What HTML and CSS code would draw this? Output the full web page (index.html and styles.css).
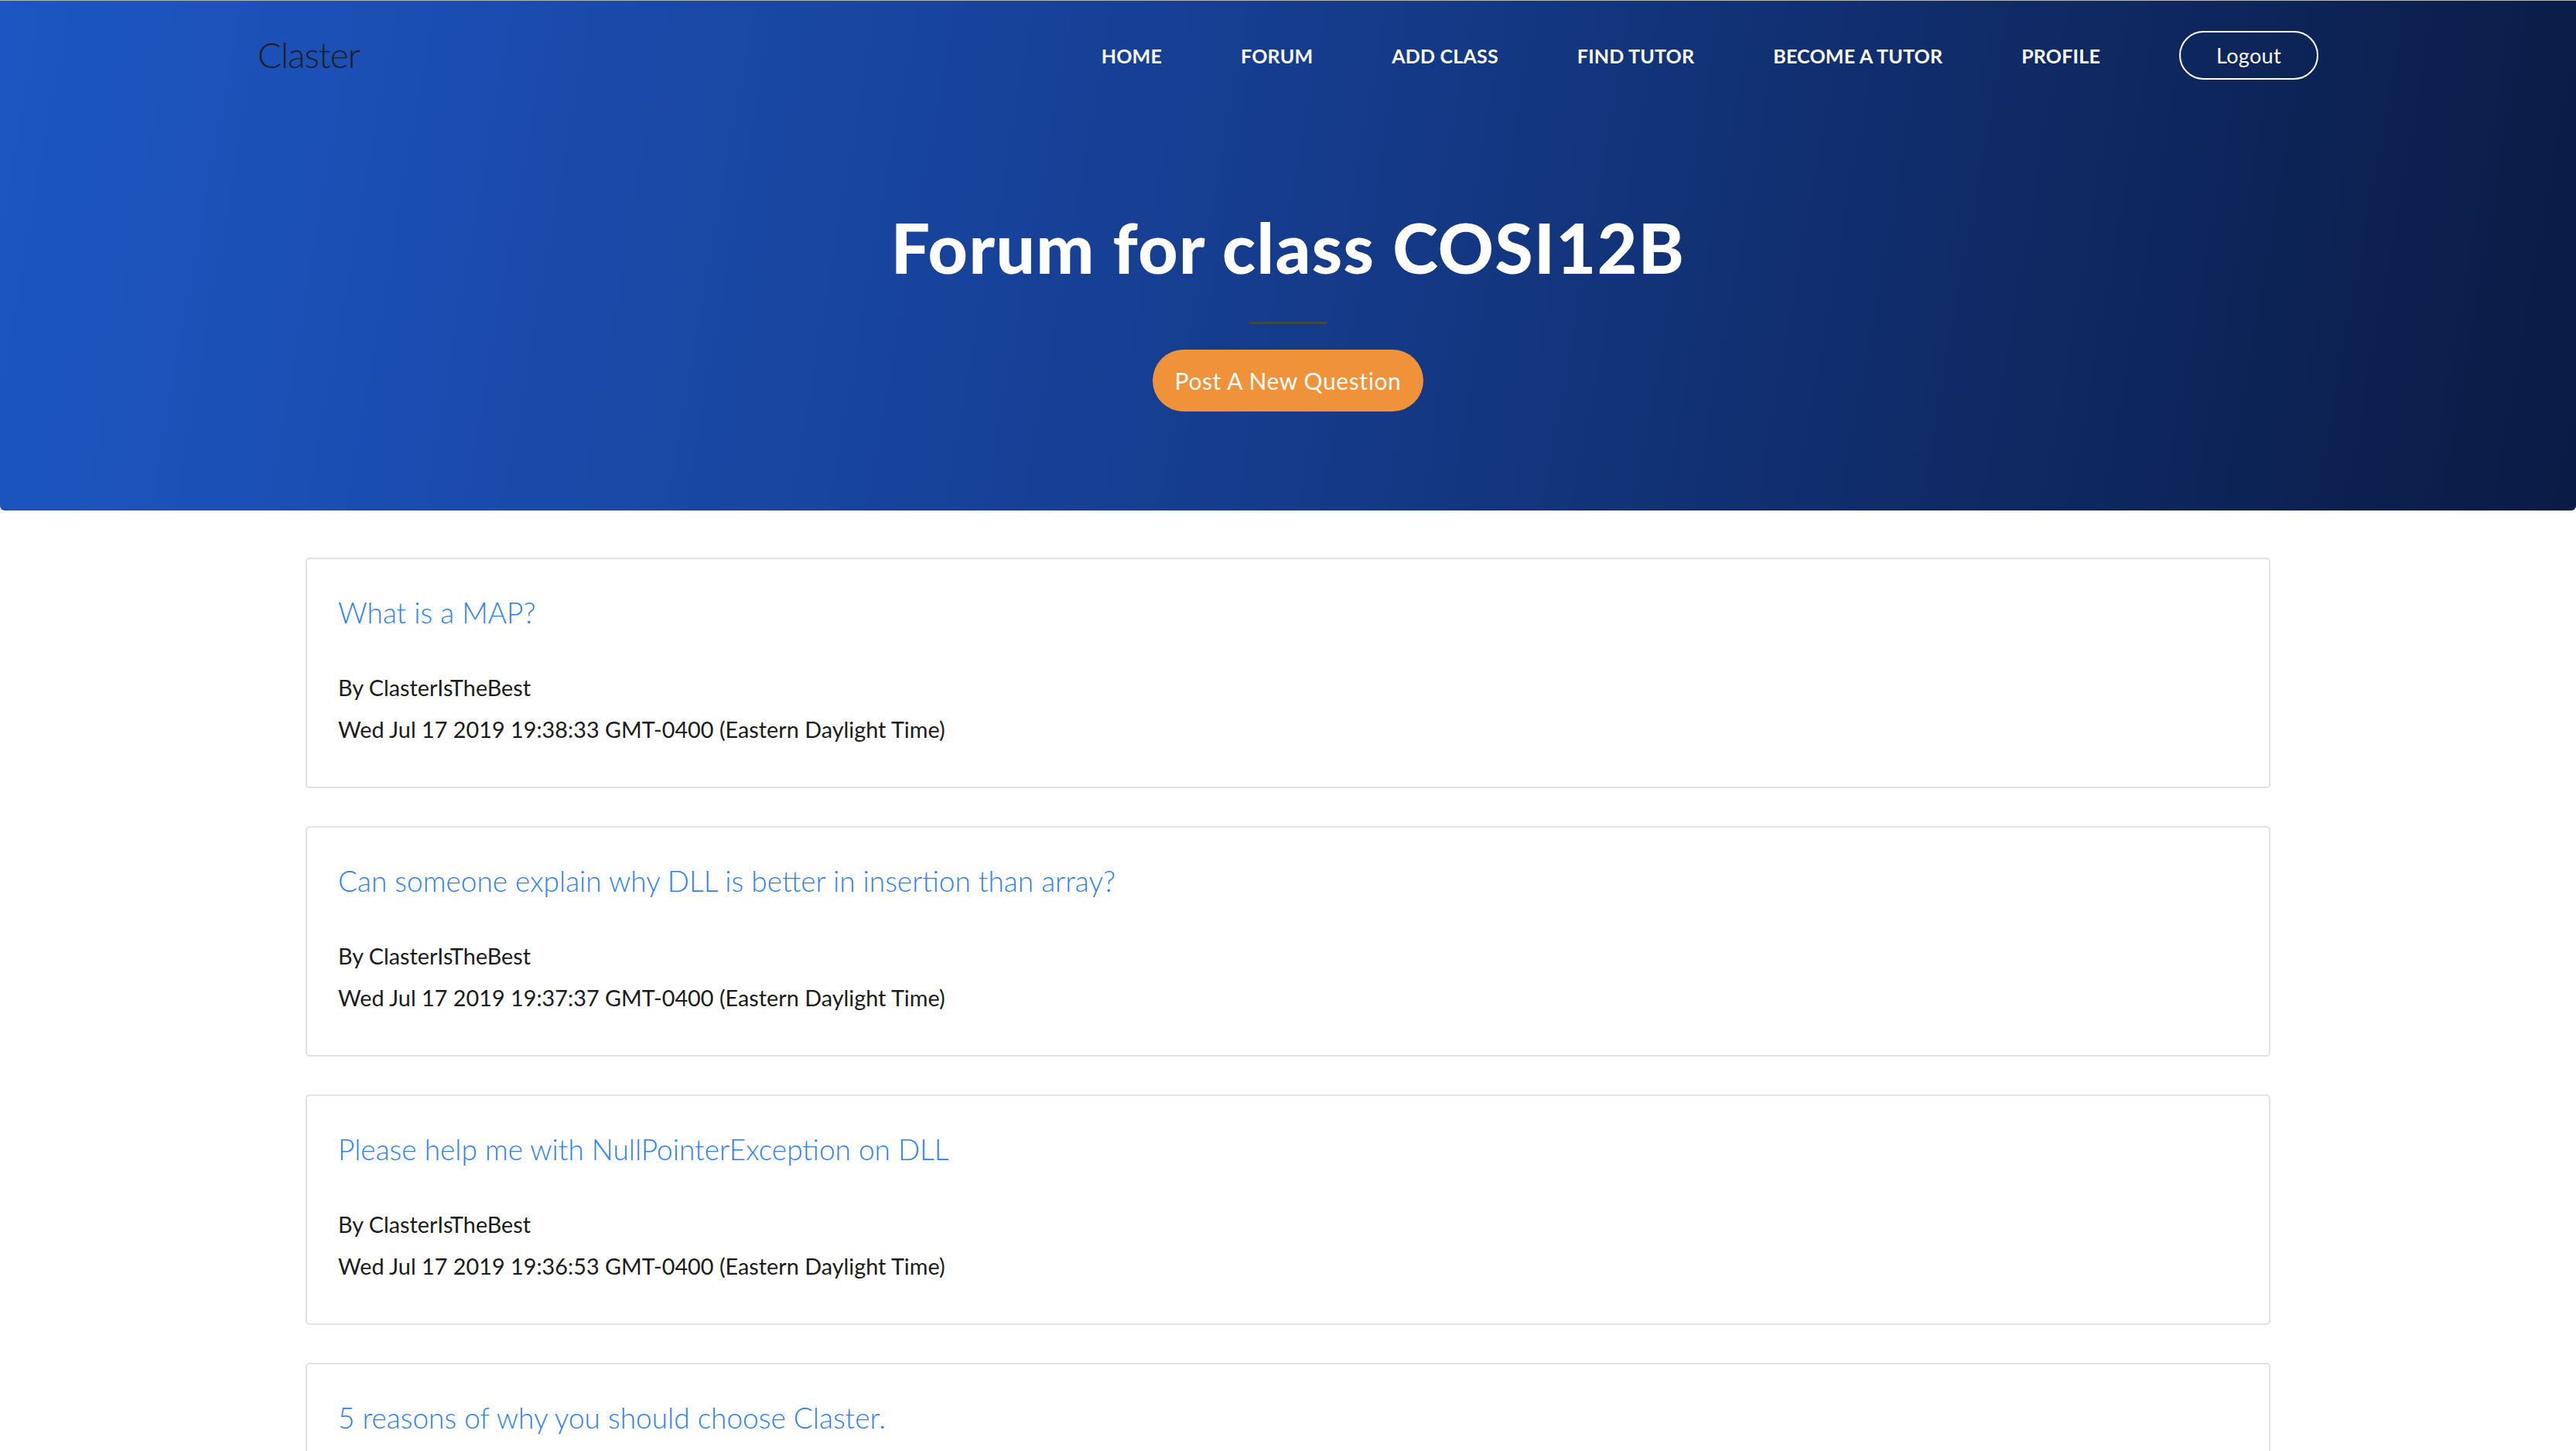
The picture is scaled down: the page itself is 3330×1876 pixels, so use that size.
FILE: index.html
```html
<!DOCTYPE html>
<html lang="en">
<head>
<meta charset="utf-8">
<title>Forum for class COSI12B</title>
<link rel="stylesheet" href="styles.css">
</head>
<body>
<header class="hero">
  <nav class="nav">
    <a class="brand" href="#">Claster</a>
    <ul class="menu">
      <li><a href="#">Home</a></li>
      <li><a href="#">Forum</a></li>
      <li><a href="#">Add Class</a></li>
      <li><a href="#">Find Tutor</a></li>
      <li><a href="#">Become a Tutor</a></li>
      <li><a href="#">Profile</a></li>
      <li><a class="logout" href="#">Logout</a></li>
    </ul>
  </nav>
  <div class="hero-body">
    <h1 class="hero-title">Forum for class COSI12B</h1>
    <hr class="divider">
    <a class="btn-post" href="#">Post A New Question</a>
  </div>
</header>
<main class="posts">
  <article class="card">
    <a class="card-title" href="#">What is a MAP?</a>
    <p class="meta">By ClasterIsTheBest</p>
    <p class="meta">Wed Jul 17 2019 19:38:33 GMT-0400 (Eastern Daylight Time)</p>
  </article>
  <article class="card">
    <a class="card-title" href="#">Can someone explain why DLL is better in insertion than array?</a>
    <p class="meta">By ClasterIsTheBest</p>
    <p class="meta">Wed Jul 17 2019 19:37:37 GMT-0400 (Eastern Daylight Time)</p>
  </article>
  <article class="card">
    <a class="card-title" href="#">Please help me with NullPointerException on DLL</a>
    <p class="meta">By ClasterIsTheBest</p>
    <p class="meta">Wed Jul 17 2019 19:36:53 GMT-0400 (Eastern Daylight Time)</p>
  </article>
  <article class="card">
    <a class="card-title" href="#">5 reasons of why you should choose Claster.</a>
    <p class="meta">By ClasterIsTheBest</p>
    <p class="meta">Wed Jul 17 2019 19:35:12 GMT-0400 (Eastern Daylight Time)</p>
  </article>
</main>
</body>
</html>
```
FILE: styles.css
```css
* { box-sizing: border-box; }
html, body { margin: 0; padding: 0; background: #fff; }
body { font-family: "Lato", "Noto Sans", sans-serif; color: #212529; }
a { text-decoration: none; }

.hero {
  height: 660px;
  border-top: 1px solid #b4b4b4;
  border-radius: 0 0 6px 6px;
  background: linear-gradient(100deg, #1d56c2 0%, #163f93 45%, #0a1b44 100%);
  padding-top: 39px;
}

.nav {
  width: 2664px;
  margin: 0 auto;
  display: flex;
  align-items: center;
  justify-content: space-between;
  height: 63px;
}
.brand {
  font-size: 46px;
  font-weight: 300;
  color: #1e1e1e;
  letter-spacing: -1px;
  margin-top: -2px;
}
.menu {
  list-style: none;
  margin: 0;
  padding: 0;
  display: flex;
  align-items: center;
  gap: 102px;
}
.menu a {
  color: #fff;
  font-size: 25px;
  font-weight: 700;
  text-transform: uppercase;
  letter-spacing: 0.2px;
}
.menu a.logout {
  display: flex;
  align-items: center;
  justify-content: center;
  width: 180px;
  height: 63px;
  border: 2px solid #fff;
  border-radius: 32px;
  text-transform: none;
  font-size: 27px;
  font-weight: 400;
  letter-spacing: 0.3px;
}

.hero-body {
  display: flex;
  flex-direction: column;
  align-items: center;
}
.hero-title {
  margin: 163px 0 0;
  font-size: 89px;
  line-height: 107px;
  font-weight: 900;
  color: #fff;
  letter-spacing: 1.5px;
}
.divider {
  width: 100px;
  height: 3px;
  margin: 43px 0 0;
  border: 0;
  background: #454545;
}
.btn-post {
  margin-top: 33px;
  width: 350px;
  height: 80px;
  border-radius: 40px;
  background: #f0923a;
  color: #fff;
  display: flex;
  align-items: center;
  justify-content: center;
  font-size: 30px;
  font-weight: 400;
  letter-spacing: 0.6px;
}

.posts {
  width: 2540px;
  margin: 61px auto 0;
  display: flex;
  flex-direction: column;
  gap: 49px;
}
.card {
  border: 2px solid #e2e2e2;
  border-radius: 5px;
  padding: 46px 40px 47px;
}
.card-title {
  display: block;
  font-size: 37px;
  line-height: 46px;
  font-weight: 300;
  color: #2f80f4;
  margin-bottom: 47px;
}
.meta {
  margin: 0;
  font-size: 28.8px;
  line-height: 54px;
  color: #1b1b1b;
}
```
